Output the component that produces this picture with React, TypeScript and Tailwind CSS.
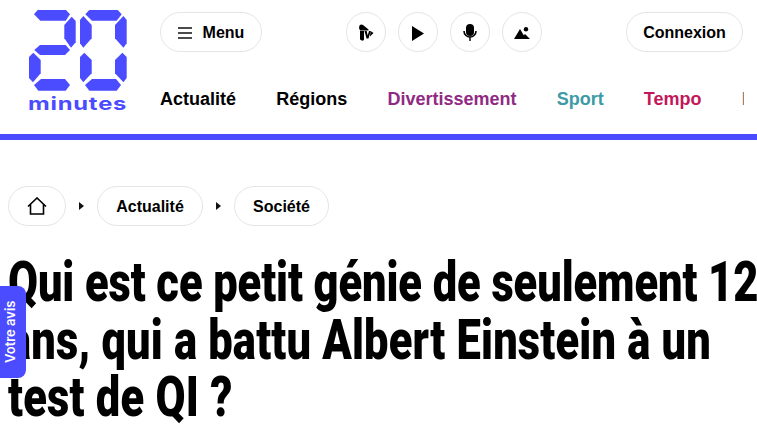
const blue = "#4b4bff";

function Logo() {
  return (
    <svg width="100" height="82" viewBox="0 0 100 82" className="block" fill={blue}>
      {/* digit 2 */}
      <polygon points="6,4.3 9.7,0 38,0 42,4.3 37.7,10.7 12.3,10.7" />
      <polygon points="43.7,6.7 47.7,11 47.7,32.3 43,37.7 36.3,28.3 36.3,15" />
      <polygon points="12,35 37.7,35 42,40 37,45 12,45 6.3,40" />
      <polygon points="5.3,42.7 12.7,50 12.7,63.3 5,72.3 1,68 1,47" />
      <polygon points="13,69 37,69 42,75 37.7,80.7 10.3,80.7 6,75" />
      {/* digit 0 */}
      <polygon points="61.3,0 89.7,0 93.7,4.3 88.7,10.7 64,10.7 57.3,4.3" />
      <polygon points="55.3,6 63.7,15 63.7,28.3 55.3,37.7 52,33.3 52,10" />
      <polygon points="95.4,6 87,15 87,28.3 95.4,37.7 98.7,33.3 98.7,10" />
      <polygon points="56.3,42.7 63.7,50 63.7,63.3 55.3,72.3 52,68 52,47" />
      <polygon points="94.4,42.7 87,50 87,63.3 95.4,72.3 98.7,68 98.7,47" />
      <polygon points="64,69 88,69 93,75 88.7,80.7 61.3,80.7 57,75" />
    </svg>
  );
}

function Pill({ children, className }: { children: React.ReactNode; className?: string }) {
  return (
    <div className={"flex h-10 items-center justify-center rounded-full border border-[#e5e5e5] bg-white font-bold text-black " + (className ?? "")}>
      {children}
    </div>
  );
}

function Caret() {
  return (
    <svg width="5" height="8" viewBox="0 0 5 8" className="mx-[13px]" fill="#111">
      <polygon points="0,0 5,4 0,8" />
    </svg>
  );
}

export default function App() {
  return (
    <div className="relative h-[427px] w-[757px] overflow-hidden bg-white font-['Liberation_Sans',sans-serif]">
      <header className="flex h-[140px] border-b-[6px] border-[#4b4bff]">
        <div className="ml-[28px] mt-[10px] w-[100px] shrink-0">
          <Logo />
          <div className="mt-[2px] origin-left scale-x-[1.32] whitespace-nowrap font-['Inter',sans-serif] text-[18px] font-bold leading-[20px] tracking-[0.6px] text-[#4b4bff]">minutes</div>
        </div>
        <div className="ml-[32px] min-w-0 flex-1">
          <div className="mt-[12px] flex items-center">
            <Pill className="w-[102px] gap-[11px] pt-[1px] text-[16px]">
              <svg width="14" height="12" viewBox="0 0 14 12" stroke="#111" strokeWidth="1.5"><path d="M0 1h14M0 6h14M0 11h14" /></svg>
              Menu
            </Pill>
            <div className="ml-[84px] flex gap-[12px]">
              <Pill className="w-10">
                <svg width="16" height="18" viewBox="0 0 16 18" fill="#000" className="mt-[1px]">
                  <path d="M1.500 1.500Q3 0 5 1l5.500 4.500v1H2L1 4z" />
                  <path d="M2 7h4v8.500q-.5 1.500-2 1-2-.5-2-1.500z" />
                  <path d="M6.500 7h2.200l1 4.500L11 7h1.800l-2.300 7.500H8.500z" />
                  <path d="M12.500 7 15.500 9 12 12.500z" />
                </svg>
              </Pill>
              <Pill className="w-10">
                <svg width="12" height="15" viewBox="0 0 12 15" fill="#000" className="mt-[2px]"><polygon points="0,0 12,7.500 0,15" /></svg>
              </Pill>
              <Pill className="w-10">
                <svg width="14" height="17" viewBox="0 0 14 17" fill="#000" className="mt-[1px]"><rect x="3" width="8" height="12" rx="4" /><path d="M1 7a6 6 0 0 0 12 0" fill="none" stroke="#000" strokeWidth="1.600" /><rect x="6.300" y="13" width="1.400" height="4" /></svg>
              </Pill>
              <Pill className="w-10">
                <svg width="16" height="12" viewBox="0 0 16 12" fill="#000" className="mt-[2px]"><polygon points="0,12 6,2 12,12" /><polygon points="7,12 11,7 16,12" /><circle cx="12" cy="2.200" r="2.200" /></svg>
              </Pill>
            </div>
            <Pill className="ml-[84px] w-[117px] pt-[1px] text-[16px]">Connexion</Pill>
          </div>
          <nav className="mt-[35px] flex w-[584px] gap-[40.2px] overflow-hidden whitespace-nowrap text-[18px] font-bold leading-[24px]">
            <span className="text-black">Actualité</span>
            <span className="text-black">Régions</span>
            <span className="text-[#8f2a84]">Divertissement</span>
            <span className="text-[#3d9aa6]">Sport</span>
            <span className="text-[#c2185b]">Tempo</span>
            <span className="text-[#8a7a78]">Planète</span>
          </nav>
        </div>
      </header>

      <div className="mt-[46px] flex items-center pl-[8px] text-[16px] font-bold">
        <Pill className="w-[58px]">
          <svg width="20" height="18" viewBox="0 0 20 18" fill="none" stroke="#000" strokeWidth="1.600"><path d="M1 9.500 10 1l9 8.500M3.500 7.500V17h13V7.500" /></svg>
        </Pill>
        <Caret />
        <Pill className="w-[106px] pt-[1px]">Actualité</Pill>
        <Caret />
        <Pill className="w-[95px] pt-[1px]">Société</Pill>
      </div>

      <div className="mt-[28px] pl-[8px]">
        <h1 className="w-[1000px] origin-left scale-x-[0.79] font-['Roboto',sans-serif] text-[55px] font-black leading-[57.6px] text-black">
          <span className="tracking-[-0.1px]">Qui est ce petit génie de seulement 12</span><br />
          <span className="tracking-[0.25px]">ans, qui a battu Albert Einstein à un</span><br />
          <span className="tracking-[0.3px]">test de QI ?</span>
        </h1>
      </div>

      <div className="absolute left-0 top-[286px] flex h-[92px] w-[26px] items-center justify-center rounded-r-[8px] bg-[#4b4bff] pr-[4px]">
        <span className="-rotate-90 whitespace-nowrap font-['Inter',sans-serif] text-[13px] font-semibold text-white">Votre avis</span>
      </div>
    </div>
  );
}
